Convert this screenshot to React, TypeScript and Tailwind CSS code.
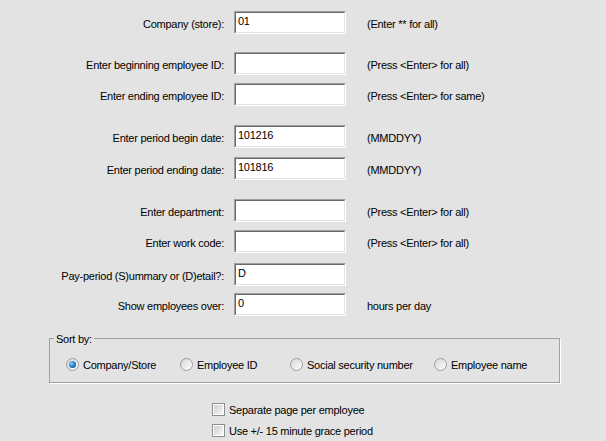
import React from "react"

type Row = { label: string; value?: string; hint?: string; mt: string }

const rows: Row[] = [
  { label: "Company (store):", value: "01", hint: "(Enter ** for all)", mt: "mt-[11px]" },
  { label: "Enter beginning employee ID:", hint: "(Press <Enter> for all)", mt: "mt-[18px]" },
  { label: "Enter ending employee ID:", hint: "(Press <Enter> for same)", mt: "mt-[8px]" },
  { label: "Enter period begin date:", value: "101216", hint: "(MMDDYY)", mt: "mt-[19px]" },
  { label: "Enter period ending date:", value: "101816", hint: "(MMDDYY)", mt: "mt-[9px]" },
  { label: "Enter department:", hint: "(Press <Enter> for all)", mt: "mt-[19px]" },
  { label: "Enter work code:", hint: "(Press <Enter> for all)", mt: "mt-[8px]" },
  { label: "Pay-period (S)ummary or (D)etail?:", value: "D", mt: "mt-[10px]" },
  { label: "Show employees over:", value: "0", hint: "hours per day", mt: "mt-[7px]" },
]

function TextBox({ value }: { value?: string }) {
  return (
    <div className="ml-[10px] w-[112px] h-[23px] shrink-0 border border-t-[#a0a0a0] border-l-[#a0a0a0] border-b-white border-r-white">
      <div className="h-full border border-t-[#696969] border-l-[#696969] border-b-[#e3e3e3] border-r-[#e3e3e3] bg-white pl-[2px] pt-[1px] leading-[14px]">
        {value}
      </div>
    </div>
  )
}

function Radio({ label, checked, w }: { label: string; checked?: boolean; w: string }) {
  return (
    <div className={`flex items-center shrink-0 whitespace-nowrap ${w}`}>
      <div className="w-[13px] h-[13px] shrink-0 rounded-full border border-[#9c9c9c] bg-gradient-to-br from-[#d6d6d6] to-white flex items-center justify-center">
        {checked && (
          <div className="w-[7px] h-[7px] rounded-full bg-[radial-gradient(circle_at_35%_35%,#7fd0ff,#0a64b0_70%,#053f7a)]" />
        )}
      </div>
      <span className="ml-[4px] pt-[2px]">{label}</span>
    </div>
  )
}

function Check({ label }: { label: string }) {
  return (
    <div className="flex items-center h-[13px] whitespace-nowrap">
      <div className="w-[13px] h-[13px] shrink-0 border border-[#8e8e8e] bg-white p-[1px]">
        <div className="w-full h-full bg-gradient-to-br from-[#d0d0d0] to-[#f6f6f6]" />
      </div>
      <span className="ml-[4px] pt-[1px]">{label}</span>
    </div>
  )
}

export default function App() {
  return (
    <div className="w-[606px] h-[441px] bg-[#e3e3e3] text-black text-[11px] tracking-[-0.25px] font-['Liberation_Sans',Arial,sans-serif] overflow-hidden">
      <div className="flex flex-col">
        {rows.map((r) => (
          <div key={r.label} className={`flex items-center h-[23px] ${r.mt}`}>
            <div className="w-[224px] shrink-0 text-right whitespace-nowrap pt-[4px]">{r.label}</div>
            <TextBox value={r.value} />
            {r.hint && <div className="ml-[21px] whitespace-nowrap pt-[4px]">{r.hint}</div>}
          </div>
        ))}
      </div>

      {/* Sort by group */}
      <div className="relative ml-[49px] mt-[22px] w-[511px] h-[45px] border border-[#a0a0a0] shadow-[1px_1px_0_#ffffff]">
        <span className="absolute left-[4px] -top-[7px] bg-[#e3e3e3] px-[2px] leading-[14px]">Sort by:</span>
        <div className="flex items-center h-full pt-[8px] pl-[16px]">
          <Radio label="Company/Store" checked w="w-[114px]" />
          <Radio label="Employee ID" w="w-[110px]" />
          <Radio label="Social security number" w="w-[144px]" />
          <Radio label="Employee name" w="w-[110px]" />
        </div>
      </div>

      <div className="ml-[212px] mt-[20px] flex flex-col gap-[8px]">
        <Check label="Separate page per employee" />
        <Check label="Use +/- 15 minute grace period" />
      </div>
    </div>
  )
}
